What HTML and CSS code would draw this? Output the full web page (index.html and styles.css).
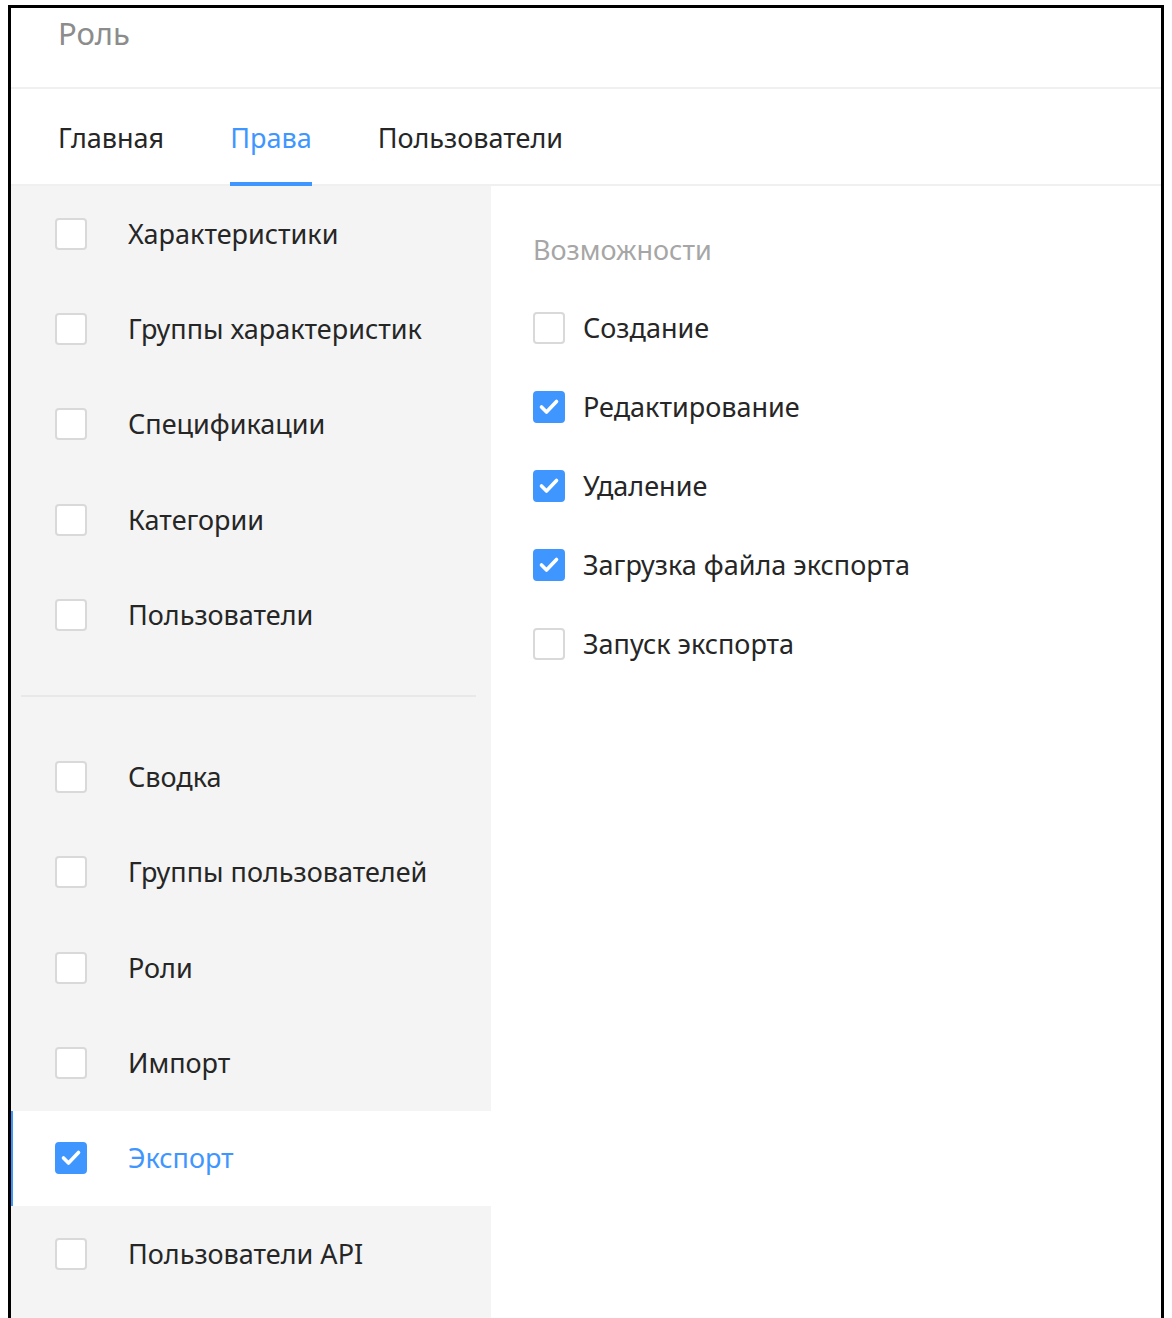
FILE: index.html
```html
<!DOCTYPE html>
<html lang="ru">
<head>
<meta charset="utf-8">
<title>Роль</title>
<link rel="stylesheet" href="styles.css">
</head>
<body>
<div class="frame">
  <div class="header"><span class="title">Роль</span></div>
  <div class="tabs">
    <div class="tab">Главная</div>
    <div class="tab active">Права</div>
    <div class="tab">Пользователи</div>
  </div>
  <div class="body">
    <div class="menu">
      <div class="item"><span class="cb"></span><span class="label">Характеристики</span></div>
      <div class="item"><span class="cb"></span><span class="label">Группы характеристик</span></div>
      <div class="item"><span class="cb"></span><span class="label">Спецификации</span></div>
      <div class="item"><span class="cb"></span><span class="label">Категории</span></div>
      <div class="item"><span class="cb"></span><span class="label">Пользователи</span></div>
      <div class="divider"></div>
      <div class="item"><span class="cb"></span><span class="label">Сводка</span></div>
      <div class="item"><span class="cb"></span><span class="label">Группы пользователей</span></div>
      <div class="item"><span class="cb"></span><span class="label">Роли</span></div>
      <div class="item"><span class="cb"></span><span class="label">Импорт</span></div>
      <div class="item selected"><span class="cb checked"><svg viewBox="0 0 32 32"><polyline points="8.5,16 13.5,21 23.5,10.5"/></svg></span><span class="label">Экспорт</span></div>
      <div class="item"><span class="cb"></span><span class="label">Пользователи API</span></div>
    </div>
    <div class="perms">
      <div class="perms-title">Возможности</div>
      <div class="perm"><span class="cb"></span><span class="plabel">Создание</span></div>
      <div class="perm"><span class="cb checked"><svg viewBox="0 0 32 32"><polyline points="8.5,16 13.5,21 23.5,10.5"/></svg></span><span class="plabel">Редактирование</span></div>
      <div class="perm"><span class="cb checked"><svg viewBox="0 0 32 32"><polyline points="8.5,16 13.5,21 23.5,10.5"/></svg></span><span class="plabel">Удаление</span></div>
      <div class="perm"><span class="cb checked"><svg viewBox="0 0 32 32"><polyline points="8.5,16 13.5,21 23.5,10.5"/></svg></span><span class="plabel">Загрузка файла экспорта</span></div>
      <div class="perm"><span class="cb"></span><span class="plabel">Запуск экспорта</span></div>
    </div>
  </div>
</div>
</body>
</html>
```

FILE: styles.css
```css
* { box-sizing: border-box; }
html, body { margin: 0; padding: 0; background: #fff; }
body {
  font-family: "Noto Sans", "Open Sans", "DejaVu Sans", sans-serif;
  color: #262626;
  height: 1318px;
  overflow: hidden;
}
.frame {
  margin: 5px 0 0 8px;
  width: 1156px;
  height: 1313px;
  overflow: hidden;
  border: 3px solid #000;
  border-bottom: none;
  display: flex;
  flex-direction: column;
}
.header {
  height: 81px;
  flex: none;
  padding-left: 47px;
  border-bottom: 2px solid #f0f0f0;
  display: flex;
  align-items: flex-start;
}
.title {
  font-size: 31px;
  line-height: 40px;
  margin-top: 5px;
  color: #8c8c8c;
}
.tabs {
  height: 97px;
  flex: none;
  display: flex;
  gap: 66px;
  padding-left: 47px;
  border-bottom: 2px solid #f0f0f0;
}
.tab {
  font-size: 27px;
  line-height: 40px;
  padding-top: 29px;
  color: #262626;
  position: relative;
}
.tab.active { color: #4096ff; }
.tab.active::after {
  content: "";
  position: absolute;
  left: 0; right: 0;
  bottom: -2px;
  height: 4px;
  background: #4096ff;
}
.body {
  display: flex;
  flex: 1;
}
.menu {
  width: 480px;
  background: #f4f4f4;
  flex: none;
}
.item {
  height: 95.3px;
  display: flex;
  align-items: center;
  padding-left: 44px;
}
.item.selected {
  background: #fff;
  box-shadow: inset 2px 0 0 #4096ff;
}
.item.selected .label { color: #4096ff; }
.label {
  font-size: 27px;
  margin-left: 41px;
  line-height: 36px;
}
.divider {
  height: 67px;
  display: flex;
  align-items: center;
  padding: 0 15px 0 10px;
}
.divider::before {
  content: "";
  display: block;
  width: 100%;
  height: 2px;
  background: #e8e8e8;
}
.cb {
  width: 32px;
  height: 32px;
  flex: none;
  border: 2px solid #d9d9d9;
  border-radius: 4px;
  background: #fff;
  display: inline-flex;
}
.cb.checked {
  background: #4096ff;
  border-color: #4096ff;
}
.cb svg {
  width: 32px;
  height: 32px;
  margin: -2px;
}
.cb svg polyline {
  fill: none;
  stroke: #fff;
  stroke-width: 3.6;
  stroke-linecap: round;
  stroke-linejoin: round;
}
.perms {
  flex: 1;
  padding: 46px 0 0 42px;
}
.perms-title {
  font-size: 27px;
  line-height: 36px;
  color: #a6a6a6;
  margin-bottom: 44px;
}
.perm {
  height: 79px;
  display: flex;
  align-items: flex-start;
}
.plabel {
  font-size: 27px;
  line-height: 32px;
  margin-left: 18px;
}
```
